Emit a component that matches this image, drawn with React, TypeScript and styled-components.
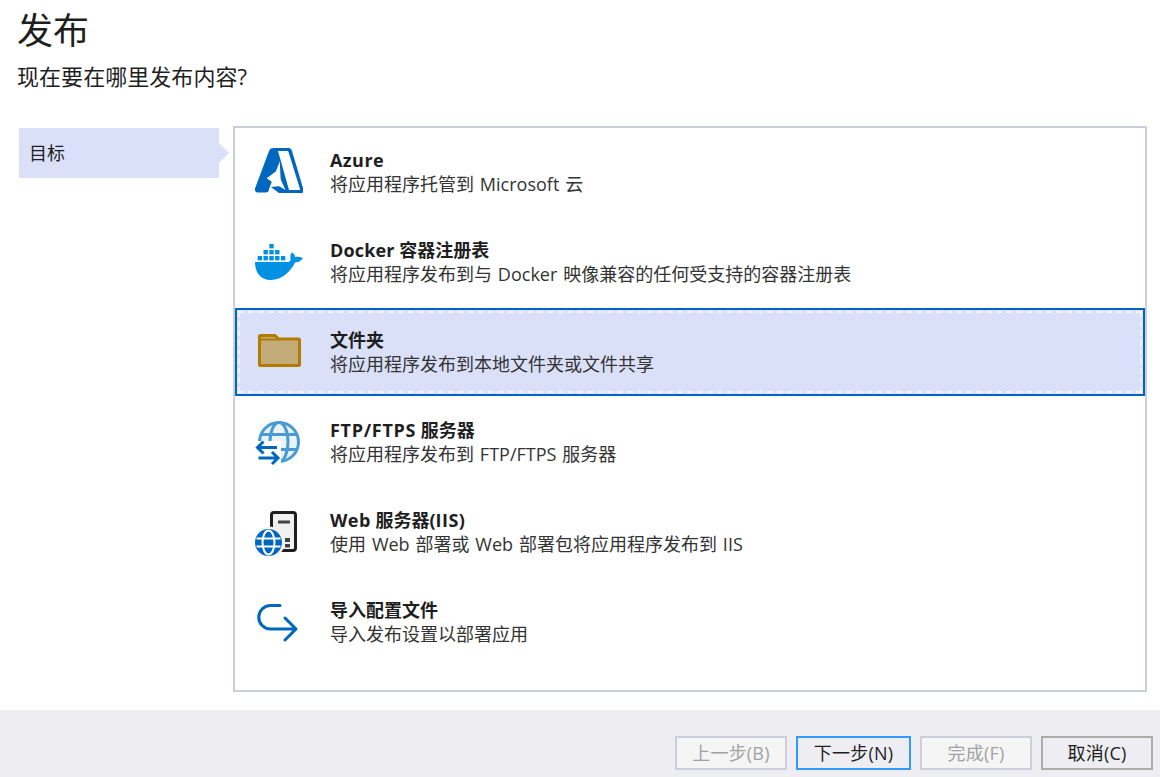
import React from "react";
import styled, { createGlobalStyle } from "styled-components";

const Global = createGlobalStyle`
  html, body { margin: 0; padding: 0; background: #fff; }
  body { font-family: "Open Sans", "Noto Sans CJK SC", sans-serif; color: #1e1e1e; }
  * { box-sizing: border-box; }
`;

const Page = styled.div`
  width: 1160px;
  height: 777px;
  display: flex;
  flex-direction: column;
  overflow: hidden;
`;
const Header = styled.header`
  height: 126px;
  padding-left: 17px;
`;
const Title = styled.h1`
  margin: 0;
  font-size: 36px;
  font-weight: 400;
  line-height: 62px;
`;
const Subtitle = styled.h2`
  margin: -1px 0 0;
  font-size: 22px;
  font-weight: 400;
  line-height: 30px;
  letter-spacing: 0.05px;
`;
const Main = styled.main`
  display: flex;
  height: 566px;
  padding-left: 19px;
  padding-right: 13px;
`;
const Sidebar = styled.nav`
  width: 214px;
  padding-top: 2px;
  flex: none;
`;
const Tab = styled.div`
  position: relative;
  width: 200px;
  height: 50px;
  padding-left: 10px;
  background: #dae0f8;
  font-size: 18px;
  line-height: 50px;
  &::after {
    content: "";
    position: absolute;
    left: 200px;
    top: 15px;
    border-left: 10px solid #dae0f8;
    border-top: 10px solid transparent;
    border-bottom: 10px solid transparent;
  }
`;
const Panel = styled.section`
  flex: 1;
  border: 2px solid #ccceDB;
`;
const Row = styled.div<{ $selected?: boolean }>`
  position: relative;
  height: 88px;
  margin-bottom: 2px;
  display: flex;
  align-items: center;
  padding-left: 18px;
  border: 2px solid ${(p) => (p.$selected ? "#0067c0" : "transparent")};
  background: ${(p) => (p.$selected ? "#dae0f8" : "transparent")};
  &::after {
    content: "";
    display: ${(p) => (p.$selected ? "block" : "none")};
    position: absolute;
    inset: 1px;
    border: 2px dashed #f0f2fd;
  }
`;
const IconCell = styled.div`
  width: 75px;
  height: 48px;
  flex: none;
  svg { display: block; }
`;
const RowText = styled.div`
  display: flex;
  flex-direction: column;
`;
const RowTitle = styled.div`
  font-size: 18px;
  font-weight: 700;
  line-height: 24px;
  color: #1e1e1e;
`;
const Latin = styled.span<{ $spacing?: number }>`
  letter-spacing: ${(p) => p.$spacing ?? 0.45}px;
`;
const RowDesc = styled.div`
  font-size: 18px;
  line-height: 24px;
  color: #333;
  word-spacing: 1.2px;
`;
const Footer = styled.footer`
  margin-top: 18px;
  height: 67px;
  background: #eeeef2;
  display: flex;
  justify-content: flex-end;
  gap: 9px;
  padding: 26px 7px 0 0;
`;
type Kind = "disabled" | "primary" | "normal";
const Btn = styled.button<{ $kind: Kind }>`
  width: ${(p) => (p.$kind === "primary" ? "115px" : "112px")};
  height: 34px;
  padding: 0;
  font-family: inherit;
  font-size: 18px;
  line-height: 28px;
  letter-spacing: 0.2px;
  border: 2px solid
    ${(p) => (p.$kind === "primary" ? "#3399ff" : p.$kind === "disabled" ? "#ccceDB" : "#acacac")};
  background: ${(p) => (p.$kind === "disabled" ? "#f5f5f5" : "#eeeef2")};
  color: ${(p) => (p.$kind === "disabled" ? "#a2a2a2" : "#1e1e1e")};
`;

const BLUE = "#0067c0";

const AzureIcon = () => (
  <svg width="48" height="48" viewBox="0 0 48 48">
    <path d="M18 0h12L14 41a3.500 3.500 0 0 1-3.500 3.500H3a3 3 0 0 1-3-4L14 3a4.500 4.500 0 0 1 4-3z" fill={BLUE} />
    <path d="M24 0h9a4 4 0 0 1 4 3l11 37a3 3 0 0 1-3 5H24l-8-6 10-1z" fill={BLUE} />
    <path d="M23 3h9a1.500 1.500 0 0 1 1.500 1L45 41a.8.8 0 0 1-.8 1H34z" fill="#fff" />
    <path d="M11.700 30.300L21.700 22.700 30.500 42 17 34z" fill="#fff" />
  </svg>
);

const DockerIcon = () => {
  const blocks: [number, number][] = [
    [2.7, 12], [8.5, 12], [14.3, 12], [20.1, 12], [25.9, 12],
    [8.5, 6], [14.3, 6], [20.1, 6],
    [14.3, 0],
  ];
  return (
    <svg width="48" height="48" viewBox="0 0 48 48">
      <g transform="translate(0 6)" fill="#0091e2">
        {blocks.map(([x, y]) => (
          <rect key={`${x}-${y}`} x={x} y={y} width="4.4" height="4.4" />
        ))}
        <path d="M0 18H33c2 0 3-2 2.500-4-.5-3 .5-5 1.500-5.500 2 1 3 2.500 3 4.500 2-.5 5 0 8 1-2 3-5 4.500-8 4.500C36 27 27 36 16 36 5 36 0 28 0 18z" />
      </g>
    </svg>
  );
};

const FolderIcon = () => (
  <svg width="48" height="48" viewBox="0 0 48 48">
    <path
      d="M4.500 8.500a1 1 0 0 1 1-1H20l3.500 3.500H43.500a1 1 0 0 1 1 1V36.500a1 1 0 0 1-1 1H5.500a1 1 0 0 1-1-1z"
      fill="#c4ab7a"
      stroke="#b17d00"
      strokeWidth="3"
      strokeLinejoin="round"
    />
    <path d="M5 11.500H23" stroke="#b17d00" strokeWidth="2" />
  </svg>
);

const FtpIcon = () => (
  <svg width="48" height="48" viewBox="0 0 48 48">
    <circle cx="24" cy="24" r="19.500" fill="#eaf2fa" stroke="#4a9ad4" strokeWidth="3" />
    <ellipse cx="24" cy="24" rx="9" ry="19.500" fill="none" stroke="#4a9ad4" strokeWidth="3" />
    <path d="M6 16.500H42M6 31.500H42" stroke="#4a9ad4" strokeWidth="3" />
    <rect x="0" y="23" width="26" height="24" fill="#fff" />
    <path d="M2.500 29.500H22M8.500 23.500L2.500 29.500 8.500 35.500" fill="none" stroke={BLUE} strokeWidth="3" />
    <path d="M3.500 40H23M17 34L23 40 17 46" fill="none" stroke={BLUE} strokeWidth="3" />
  </svg>
);

const WebIcon = () => (
  <svg width="48" height="48" viewBox="0 0 48 48">
    <rect x="16.500" y="4.500" width="24" height="38" rx="2.500" fill="#f0f0f0" stroke="#1e1e1e" strokeWidth="3" />
    <path d="M23 14H35" stroke="#424242" strokeWidth="3" />
    <rect x="30" y="30" width="5" height="4" fill="#424242" />
    <rect x="30" y="36" width="5" height="3.500" fill="#424242" />
    <circle cx="13.500" cy="34.500" r="16" fill="#f4f4f4" />
    <circle cx="13.500" cy="34.500" r="13.500" fill={BLUE} />
    <ellipse cx="13.500" cy="34.500" rx="6" ry="12" fill="none" stroke="#fff" strokeWidth="2" />
    <path d="M1.500 30.500H25.500M1.500 38.500H25.500" stroke="#fff" strokeWidth="2" />
  </svg>
);

const ImportIcon = () => (
  <svg width="48" height="48" viewBox="0 0 48 48">
    <path
      d="M25 7.500H15.500A11.750 11.750 0 0 0 15.500 31H41M30 20L41 31 30 42"
      fill="none"
      stroke={BLUE}
      strokeWidth="3"
      strokeLinecap="round"
      strokeLinejoin="round"
    />
  </svg>
);

const items: { id: string; icon: React.ReactNode; title: React.ReactNode; desc: string; selected?: boolean }[] = [
  { id: "azure", icon: <AzureIcon />, title: <Latin>Azure</Latin>, desc: "将应用程序托管到 Microsoft 云" },
  { id: "docker", icon: <DockerIcon />, title: <><Latin $spacing={0.15}>Docker</Latin> 容器注册表</>, desc: "将应用程序发布到与 Docker 映像兼容的任何受支持的容器注册表" },
  { id: "folder", icon: <FolderIcon />, title: "文件夹", desc: "将应用程序发布到本地文件夹或文件共享", selected: true },
  { id: "ftp", icon: <FtpIcon />, title: <><Latin $spacing={0.7}>FTP/FTPS</Latin> 服务器</>, desc: "将应用程序发布到 FTP/FTPS 服务器" },
  { id: "web", icon: <WebIcon />, title: <><Latin>Web</Latin> 服务器(<Latin>IIS</Latin>)</>, desc: "使用 Web 部署或 Web 部署包将应用程序发布到 IIS" },
  { id: "import", icon: <ImportIcon />, title: "导入配置文件", desc: "导入发布设置以部署应用" },
];

const buttons: { label: string; kind: Kind }[] = [
  { label: "上一步(B)", kind: "disabled" },
  { label: "下一步(N)", kind: "primary" },
  { label: "完成(F)", kind: "disabled" },
  { label: "取消(C)", kind: "normal" },
];

export default function App() {
  return (
    <Page>
      <Global />
      <Header>
        <Title>发布</Title>
        <Subtitle>现在要在哪里发布内容?</Subtitle>
      </Header>
      <Main>
        <Sidebar>
          <Tab>目标</Tab>
        </Sidebar>
        <Panel>
          {items.map((it) => (
            <Row key={it.id} $selected={it.selected}>
              <IconCell>{it.icon}</IconCell>
              <RowText>
                <RowTitle>{it.title}</RowTitle>
                <RowDesc>{it.desc}</RowDesc>
              </RowText>
            </Row>
          ))}
        </Panel>
      </Main>
      <Footer>
        {buttons.map((b) => (
          <Btn key={b.label} $kind={b.kind}>{b.label}</Btn>
        ))}
      </Footer>
    </Page>
  );
}
